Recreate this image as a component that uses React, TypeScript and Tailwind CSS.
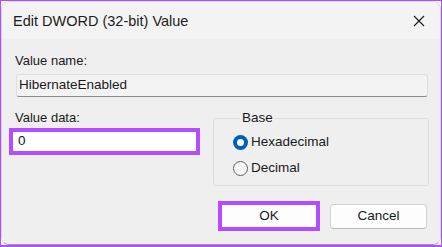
import React from "react";

const font = { fontFamily: '"Liberation Sans", Arial, sans-serif' };

function CloseIcon() {
  return (
    <svg width="12" height="12" viewBox="0 0 12 12" className="block">
      <path d="M1 1 L11 11 M11 1 L1 11" stroke="#1b1b1b" strokeWidth="1.1" fill="none" />
    </svg>
  );
}

function Radio({ checked, label }: { checked?: boolean; label: string }) {
  return (
    <div className="flex h-[16px] items-center">
      {checked ? (
        <span className="flex h-[15px] w-[15px] items-center justify-center rounded-full bg-[#005fb8]">
          <span className="h-[7px] w-[7px] rounded-full bg-white" />
        </span>
      ) : (
        <span className="h-[15px] w-[15px] rounded-full border border-[#5f5f5f] bg-[#f6f6f6]" />
      )}
      <span className="ml-[3px] text-[13.5px] leading-[16px] text-[#1a1a1a]">{label}</span>
    </div>
  );
}

export default function App() {
  return (
    <div className="flex h-[247px] w-[442px] bg-[#b44cff] pt-[1px] pl-[1px] pr-[2px] pb-[2px]" style={font}>
      <div className="flex flex-1 bg-white">
        <div className="flex flex-1 flex-col overflow-hidden rounded-[8px] border border-[#d6d6d6] border-b-[#9c9c9c]">
          {/* title bar */}
          <div className="flex h-[37px] shrink-0 items-center justify-between bg-[#f3f3f3] pl-[11px] pr-[15px]">
            <span className="text-[14.5px] leading-[18px] text-[#1c1c1c]">Edit DWORD (32-bit) Value</span>
            <CloseIcon />
          </div>

          {/* body */}
          <div className="flex flex-1 flex-col bg-[#efefef] pl-[7px] pr-[11px] pt-[14px]">
            <div className="ml-[6px] text-[13px] leading-[16px] text-[#1a1a1a]">Value name:</div>
            <div className="ml-[7px] mt-[5px] flex h-[23px] w-[412px] items-center rounded-[3px] border border-[#dedede] border-b-[#8a8a8a] bg-[#f3f3f3] pl-[2px] text-[13.5px] text-[#1a1a1a]">
              HibernateEnabled
            </div>

            <div className="mt-[13px] flex items-start gap-[13px]">
              <div className="flex w-[191px] flex-col">
                <div className="ml-[6px] text-[13px] leading-[16px] text-[#1a1a1a]">Value data:</div>
                <div className="mt-[2px] flex h-[27px] items-center border-[4px] border-[#b44cff] bg-white pl-[5px] text-[13.5px] text-[#1a1a1a]">
                  0
                </div>
              </div>

              <fieldset className="w-[216px] rounded-[3px] border border-[#dcdcdc] pl-[19px] pb-[9px]">
                <legend className="ml-[7px] px-[2px] text-[13.5px] leading-[16px] text-[#1a1a1a]">Base</legend>
                <div className="mt-[8px] flex flex-col gap-[10px]">
                  <Radio checked label="Hexadecimal" />
                  <Radio label="Decimal" />
                </div>
              </fieldset>
            </div>

            <div className="mt-[15px] flex items-center justify-end gap-[10px] pr-[2px]">
              <div className="flex h-[30px] w-[102px] items-center justify-center border-[4px] border-[#b44cff] bg-[#fdfdfd] text-[13.5px] text-[#1a1a1a]">
                OK
              </div>
              <div className="flex h-[25px] w-[97px] items-center justify-center rounded-[4px] border border-[#d2d2d2] border-b-[#b9b9b9] bg-[#fdfdfd] text-[13.5px] text-[#1a1a1a]">
                Cancel
              </div>
            </div>
          </div>
        </div>
      </div>
    </div>
  );
}
